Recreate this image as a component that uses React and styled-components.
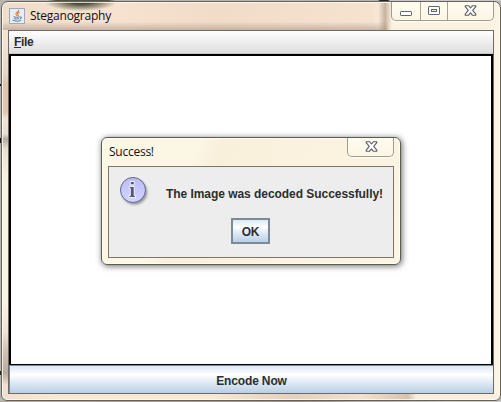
import React from "react";
import styled, { createGlobalStyle } from "styled-components";

const GlobalStyle = createGlobalStyle`
  body { margin: 0; overflow: hidden; }
  *, *::before, *::after { box-sizing: border-box; }
`;

const Desktop = styled.div`
  width: 501px;
  height: 402px;
  padding: 1px 0 1px 1px;
  background:
    linear-gradient(#111, #111) 0 84px / 1px 2px no-repeat,
    linear-gradient(#111, #111) 0 138px / 1px 5px no-repeat,
    linear-gradient(#222, #222) 0 371px / 1px 4px no-repeat,
    linear-gradient(90deg, #b9b5ac 0 48px, #4d5340 56px 108px, #b9b5ac 116px 378px, #222 380px 388px, #c9c9c9 390px) 0 0 / 100% 1px no-repeat,
    linear-gradient(90deg, #b5aaa2, #9d938d 60%, #ccc 90%) 0 401px / 100% 1px no-repeat,
    #b4b5b1;
`;

const Window = styled.section`
  display: flex;
  flex-direction: column;
  width: 500px;
  height: 400px;
  padding: 0 6px 6px;
  border: 1px solid #686159;
  border-radius: 7px 7px 6px 6px;
  box-shadow: inset 0 0 0 1px rgba(255, 253, 245, 0.75);
  background:
    radial-gradient(ellipse 36px 9px at 79px 0, rgba(57, 61, 41, 0.9) 0 25%, rgba(97, 96, 74, 0) 100%) 0 0 / 170px 16px no-repeat,
    linear-gradient(90deg, transparent, rgba(171, 147, 124, 0.65) 50%, transparent) 376px 0 / 14px 28px no-repeat,
    linear-gradient(rgba(160, 130, 100, 0) 70%, rgba(120, 100, 90, 0.35)) 0 0 / 385px 28px no-repeat,
    linear-gradient(90deg, #efddcb, #f6e2cf 30%, #f1dcc8 55%, #f5e2cf 95%, transparent) 0 0 / 388px 28px no-repeat,
    linear-gradient(#f3e3d3 0 40px, #e5d7c8 72px, #dfc6ac 82px 110px, #ede3d5 116px, #e8dfd4 132px, #b5aca0 137px, #e7dfd2 147px, #f4ebdd 165px, #faf2e2 180px 300px, #f0e3d5 330px, #d4c6b8 346px, #b9aa9c 371px, #f0dfd0 383px) 0 0 / 7px 100% no-repeat,
    linear-gradient(90deg, #f2dfcf, #f7e7d5 50px 210px, #e2d0c0 290px, #f2e1ce 360px, #d7c2b0 406px, #f8efdf 414px) 0 100% / 100% 7px no-repeat,
    #fbf3e2;
`;

const TitleBar = styled.header`
  display: flex;
  flex: none;
  align-items: flex-start;
  height: ${(p) => p.$height}px;
`;

const Title = styled.h1`
  flex: 1;
  margin: 0;
  padding: ${(p) => p.$top}px 0 0 ${(p) => p.$inset || 0}px;
  color: #111;
  font: 400 12px/16px "Open Sans", sans-serif;
  letter-spacing: ${(p) => p.$tracking}px;
  white-space: nowrap;
`;

const AppIcon = styled.svg`
  flex: none;
  margin: 6px 5px 0 1px;
`;

const CaptionControls = styled.div`
  display: flex;
  height: 19px;
  border: 1px solid #a39c8d;
  border-top: 0;
  border-radius: 0 0 5px 5px;
  background: linear-gradient(rgba(255, 253, 243, 0.85), rgba(252, 246, 230, 0.85));
  box-shadow: 0 1px 0 rgba(255, 255, 255, 0.7);
`;

const CaptionButton = styled.button`
  display: flex;
  align-items: center;
  justify-content: center;
  width: ${(p) => p.$width}px;
  padding: 0 0 1px ${(p) => p.$shift || 0}px;
  border: 0;
  background: none;
  & + & { border-left: 1px solid #aaa394; }
`;

const Frame = styled.main`
  display: flex;
  flex: 1;
  flex-direction: column;
  border: 1px solid #716a62;
`;

const MenuBar = styled.nav`
  display: flex;
  height: 23px;
  padding: 3px 5px;
  border-bottom: 1px solid #c7c7c7;
  background: linear-gradient(#fff, #dedede);
`;

const MenuItem = styled.span`
  color: #2d2d2d;
  font: 700 12px/16px "Liberation Sans", sans-serif;
  letter-spacing: -0.3px;
`;

const ImagePane = styled.div`
  flex: 1;
  border: solid #000;
  border-width: 2px 2px 1px;
  background: #fff;
`;

const EncodeButton = styled.button`
  height: 28px;
  padding: 3px 0 0;
  border: solid #7a8a99;
  border-width: 1px 0 0 1px;
  background: linear-gradient(#dde8f3, #fff 32%, #edf3f9 48%, #b8cfe5);
  color: #2b2e33;
  font: 700 12px/16px "Liberation Sans", sans-serif;
  letter-spacing: -0.15px;
`;

const Dialog = styled.section`
  position: absolute;
  left: 101px;
  top: 137px;
  display: flex;
  flex-direction: column;
  width: 300px;
  height: 128px;
  padding: 0 6px 6px;
  border: 1px solid #5f5a52;
  border-radius: 6px;
  background: linear-gradient(115deg, #fcf6e5 0 28%, #f9f0dc 34%, #fbf2df 65%, #fcf5e4);
  box-shadow: 1px 1px 6px rgba(0, 0, 0, 0.6), inset 0 0 0 1px #fffcf2;
`;

const DialogBody = styled.div`
  display: grid;
  grid-template: 51px 1fr / 57px 1fr;
  flex: 1;
  border: 1px solid #7b746a;
  background: #ededed;
`;

const InfoIcon = styled.svg`
  margin: 8px 0 0 9px;
`;

const Message = styled.p`
  margin: 0;
  padding-top: 19px;
  color: #2d2d2d;
  font: 700 12px/16px "Liberation Sans", sans-serif;
  letter-spacing: ${(p) => p.$tracking}px;
  white-space: nowrap;
`;

const OkButton = styled.button`
  grid-column: 1 / 3;
  width: 39px;
  height: 26px;
  margin-left: 122px;
  padding: 1px 0 0;
  border: 2px solid #7a8a99;
  background: linear-gradient(#dde8f3, #fff 32%, #e8f0f8 50%, #b8cfe5);
  color: #2b2e33;
  font: 700 12px/16px "Liberation Sans", sans-serif;
  letter-spacing: -0.3px;
`;

function CloseGlyph() {
  return (
    <svg width="13" height="11" viewBox="0 0 13 11">
      <path
        d="M1.2 .8H4.7L6.5 3 8.3.8H11.8V1.7L8.7 5.4 11.8 9.2V10.2H8.3L6.5 7.9 4.7 10.2H1.2V9.2L4.3 5.4 1.2 1.7Z"
        fill="#fff"
        stroke="#5c5d68"
        strokeWidth="1.1"
        strokeLinejoin="round"
      />
    </svg>
  );
}

export default function App() {
  return (
    <>
      <GlobalStyle />
      <Desktop>
        <Window>
          <TitleBar $height={28}>
            <AppIcon width="16" height="16" viewBox="0 0 16 16">
              <rect x=".5" y=".5" width="15" height="15" fill="#e9edf2" stroke="#9cabbc" />
              <path d="M9.7 1.8C10 4.1 6 4.4 7 6.3L8.2 8M10.6 4.1C8.7 4.8 8 5.5 9 6.4Q9.6 7.1 8.8 8" fill="none" stroke="#df853c" strokeWidth="1.2" />
              <path d="M4.5 8.8Q7.5 9.8 10.7 8.8M5.1 10.6Q7.5 11.5 10 10.6M3.6 12.2Q7.7 14.3 12.2 12.5M11 9Q13.3 8.7 12.3 10.2L10.8 11" fill="none" stroke="#587e9f" />
            </AppIcon>
            <Title $top={6} $tracking={-0.25}>Steganography</Title>
            <CaptionControls>
              <CaptionButton $width={28} aria-label="Minimize">
                <svg width="12" height="11" viewBox="0 0 12 11">
                  <rect x=".5" y="6.5" width="11" height="4" rx=".6" fill="#fff" stroke="#5d6570" />
                </svg>
              </CaptionButton>
              <CaptionButton $width={27} aria-label="Maximize">
                <svg width="12" height="11" viewBox="0 0 12 11">
                  <rect x=".5" y="1.5" width="11" height="8" rx=".6" fill="#fff" stroke="#5d6570" />
                  <rect x="3.5" y="4.5" width="5" height="2" fill="#f4eee0" stroke="#5d6570" />
                </svg>
              </CaptionButton>
              <CaptionButton $width={46} aria-label="Close"><CloseGlyph /></CaptionButton>
            </CaptionControls>
          </TitleBar>
          <Frame>
            <MenuBar><MenuItem><u>F</u>ile</MenuItem></MenuBar>
            <ImagePane />
            <EncodeButton>Encode Now</EncodeButton>
          </Frame>
        </Window>
        <Dialog role="dialog">
          <TitleBar $height={28}>
            <Title $top={6} $inset={1} $tracking={-0.25}>Success!</Title>
            <CaptionControls>
              <CaptionButton $width={45} $shift={2} aria-label="Close"><CloseGlyph /></CaptionButton>
            </CaptionControls>
          </TitleBar>
          <DialogBody>
            <InfoIcon width="32" height="32" viewBox="0 0 32 32">
              <defs>
                <filter id="shade"><feGaussianBlur stdDeviation="1.2" /></filter>
                <linearGradient id="orb" x2="0" y2="1">
                  <stop stopColor="#bcbcf6" />
                  <stop offset="1" stopColor="#d4d4ff" />
                </linearGradient>
              </defs>
              <circle cx="16.5" cy="17" r="12.8" fill="#9999a5" filter="url(#shade)" />
              <circle cx="15" cy="15" r="12.5" fill="url(#orb)" stroke="#66668c" />
              <path d="M12.3 6.5H16.2V9.8H12.3ZM11.3 11.5H16.2V20.5H17.5V22.5H11V20.5H12.3V13.5H11.3Z" fill="#555580" stroke="#fff" strokeWidth=".9" />
            </InfoIcon>
            <Message $tracking={-0.05}>The Image was decoded Successfully!</Message>
            <OkButton>OK</OkButton>
          </DialogBody>
        </Dialog>
      </Desktop>
    </>
  );
}
